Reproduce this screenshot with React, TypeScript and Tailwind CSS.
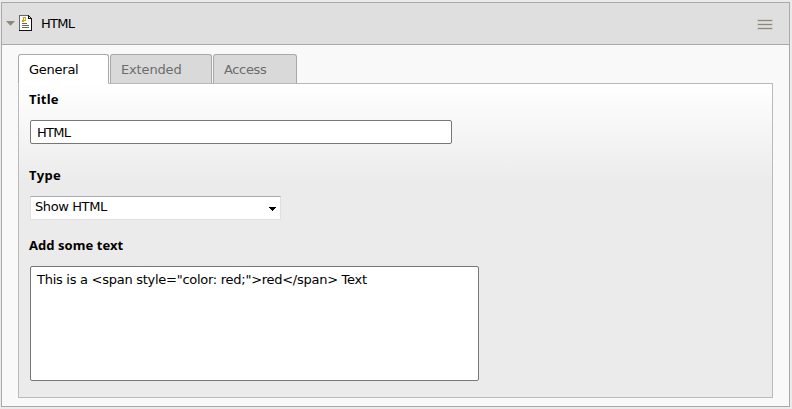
import { useState } from "react";

function PageIcon() {
  return (
    <svg className="block" width="13" height="16" viewBox="0 0 13 16" shapeRendering="crispEdges">
      <path d="M0 0H10V1H11V2H12V3H13V16H0Z" fill="#fff" />
      <path d="M0 0H9V1H1V15H0Z" fill="#666" />
      <path d="M9 0H10V1H11V2H12V3H13V16H0V15H12V4H9Z" fill="#111" />
      <path d="M10 2H11V3H10Z" fill="#fff" />
      <path d="M4 2H7V6H5V7H3V5H4Z" fill="#f39a0c" />
      <path d="M5 3H6V5H5Z" fill="#fff" />
      <path d="M3 8H8V9H3Z M3 10H10V11H3Z M3 12H10V13H3Z" fill="#666" />
    </svg>
  );
}

function Header() {
  return (
    <header className="flex h-[42px] items-start border-b border-[#a9a9a9] bg-[#dfdfdf]">
      <svg className="mt-[18px] ml-[4px]" width="9" height="5" viewBox="0 0 9 5">
        <path d="M0 0H9L4.5 4.7Z" fill="#8f8777" />
      </svg>
      <div className="mt-[12px] ml-[4px]">
        <PageIcon />
      </div>
      <span className="mt-[13px] ml-[9px] leading-4 tracking-[-0.7px]">HTML</span>
      <svg className="mt-[16px] mr-[15px] ml-auto" width="17" height="12" viewBox="0 0 17 12" shapeRendering="crispEdges">
        <path d="M0 0H16V3H0Z M0 4H16V7H0Z M0 8H16V11H0Z" fill="#d2d1cd" />
        <path d="M1 1H15V2H1Z M1 5H15V6H1Z M1 9H15V10H1Z" fill="#8f8777" />
      </svg>
    </header>
  );
}

const tabs = [
  { label: "General", width: "w-[91px] tracking-[-0.25px]" },
  { label: "Extended", width: "w-[102px] tracking-[-0.15px]" },
  { label: "Access", width: "w-[84px] tracking-[-0.35px]" },
];

function Tabs({ active, onSelect }: { active: number; onSelect: (i: number) => void }) {
  return (
    <div className="relative z-10 -mb-px flex gap-px">
      {tabs.map((tab, i) => (
        <button
          key={tab.label}
          onClick={() => onSelect(i)}
          className={`${tab.width} flex h-[30px] items-start rounded-t-[3px] border border-[#a9a9a9] pt-[7px] pl-[10px] leading-4 ${
            i === active ? "border-b-white bg-white text-black" : "border-b-[#bababa] bg-[#d9d9d9] text-[#6c6c6c]"
          }`}
        >
          {tab.label}
        </button>
      ))}
    </div>
  );
}

const labelStyle = "h-4 font-['Noto_Sans',sans-serif] leading-4 font-bold";

export default function App() {
  const [active, setActive] = useState(0);
  return (
    <div className="h-[409px] w-[792px] bg-[#ebebeb] pt-[2px] pl-px font-['DejaVu_Sans',Verdana,sans-serif] text-[13px] text-black">
      <section className="h-[405px] w-[789px] border border-[#a9a9a9] bg-[#f9f9f9]">
        <Header />
        <main className="px-4 pt-[9px]">
          <Tabs active={active} onSelect={setActive} />
          <div className="flex h-[315px] flex-col items-start border border-[#bababa] bg-[linear-gradient(to_bottom,#ffffff_0px,#ebebeb_100px)] pl-[10px]">
            <label className={`${labelStyle} mt-[7px] tracking-[0.2px]`}>Title</label>
            <input
              defaultValue="HTML"
              className="mt-[13px] ml-px h-[24px] w-[422px] rounded-[2px] border border-[#777] bg-white px-[6px] leading-4 tracking-[-0.7px] outline-none"
            />
            <label className={`${labelStyle} mt-[23px] tracking-[0.4px]`}>Type</label>
            <div className="mt-[13px] ml-px flex h-[24px] w-[251px] justify-between border border-[#dfdfe8] border-t-[#a9a9b4] bg-white pr-[4px] pl-[4px]">
              <span className="mt-[2px] leading-4 tracking-[-0.4px]">Show HTML</span>
              <svg className="mt-[10px]" width="7" height="4" viewBox="0 0 7 4" shapeRendering="crispEdges">
                <path d="M0 0H7V1H6V2H5V3H4V4H3V3H2V2H1V1H0Z" fill="#000" />
              </svg>
            </div>
            <label className={`${labelStyle} mt-[17px] tracking-[0.05px]`}>Add some text</label>
            <textarea
              defaultValue={'This is a <span style="color: red;">red</span> Text'}
              className="mt-[13px] ml-px h-[115px] w-[449px] resize-none rounded-[2px] border border-[#777] bg-white px-[6px] pt-[5px] leading-4 tracking-[-0.27px] outline-none"
            />
          </div>
        </main>
      </section>
    </div>
  );
}
